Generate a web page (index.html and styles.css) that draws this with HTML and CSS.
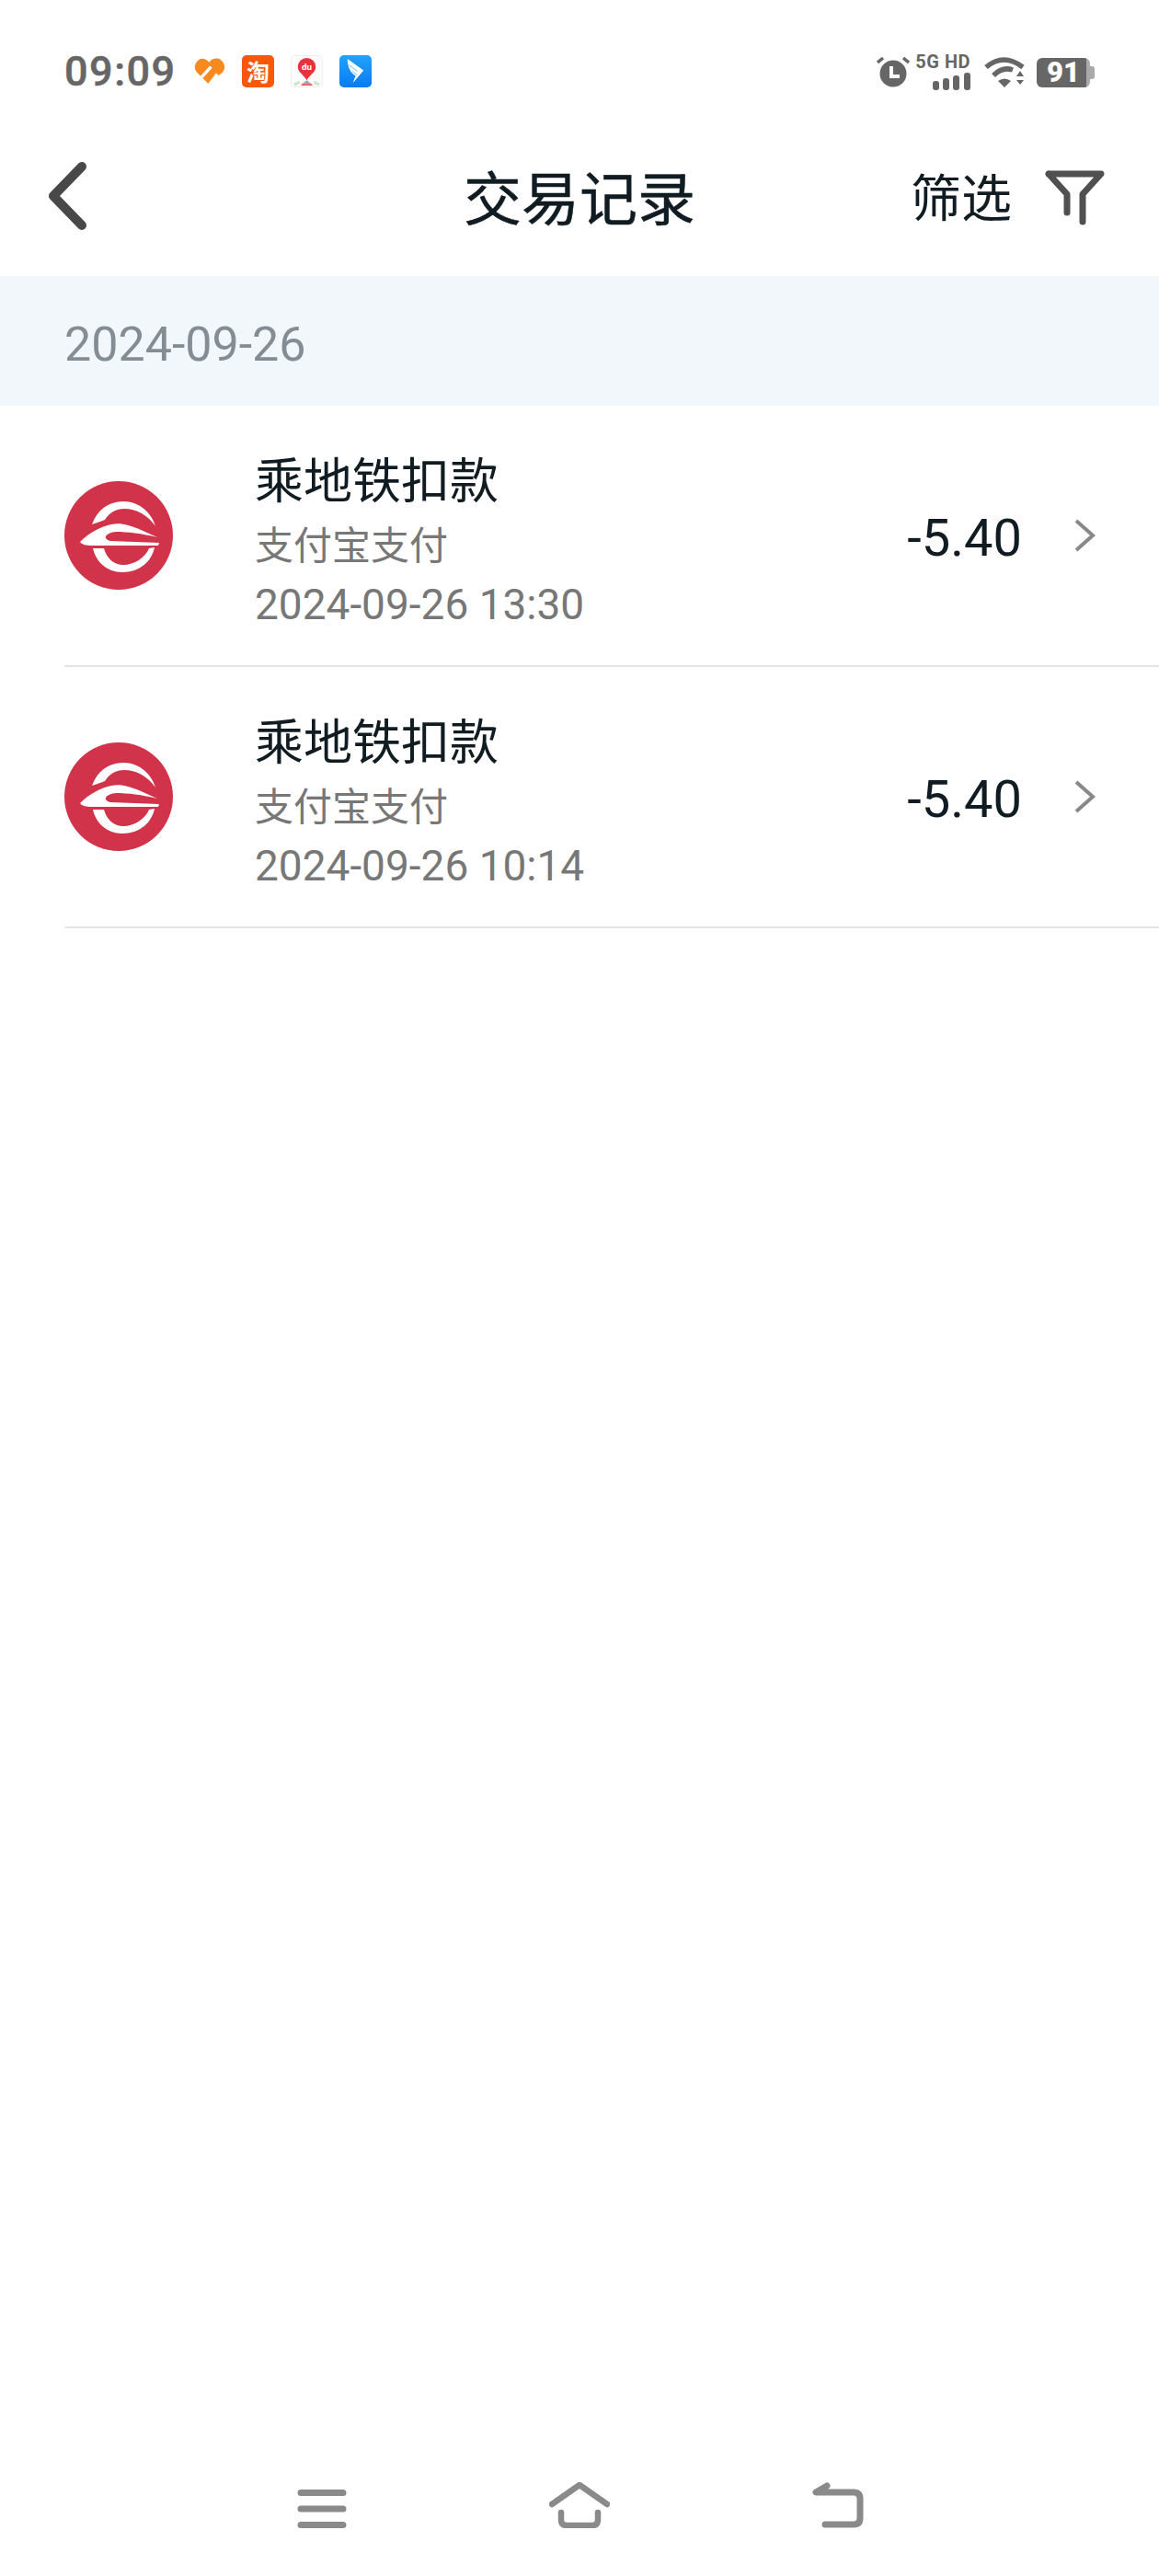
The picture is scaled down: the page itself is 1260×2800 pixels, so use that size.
FILE: index.html
```html
<!DOCTYPE html>
<html lang="zh">
<head>
<meta charset="utf-8">
<title>交易记录</title>
<link rel="stylesheet" href="styles.css">
</head>
<body>
<div class="screen">
  <div class="status">
    <span class="time">09:09</span>
    <div class="apps">
      <svg width="35" height="35" viewBox="0 0 36 36"><path d="M17 32 4 19C0 14 2 7 8 4 12 3 16 5 18 8 20 4 25 3 29 4 35 7 37 14 33 19Z" fill="#f78a1f"/><path d="M9 25 20 13M18 33 27 21" stroke="#fff" stroke-width="3.5" fill="none"/></svg>
      <span class="taobao">淘</span>
      <svg width="35" height="35" viewBox="0 0 36 36"><rect x=".5" y=".5" width="35" height="35" rx="3" fill="#fbfbfb" stroke="#eee"/><path d="M18 3a10 10 0 0 1 10 10c0 6-7 9-10 15-3-6-10-9-10-15A10 10 0 0 1 18 3z" fill="#e8323c"/><text x="18" y="16" text-anchor="middle" class="du">du</text><path d="M18 28 13 32H23Z" fill="#9ab"/><path d="M12 33H24" stroke="#d33" stroke-width="1.5"/><path d="M4 33 10 30M32 33 26 30" stroke="#cfe5c8" stroke-width="3"/></svg>
      <svg width="35" height="35" viewBox="0 0 36 36"><defs><linearGradient id="dt" x1="0" y1="0" x2="0" y2="1"><stop offset="0" stop-color="#21a3fb"/><stop offset="1" stop-color="#0a7bef"/></linearGradient></defs><rect width="36" height="36" rx="5" fill="url(#dt)"/><path d="M9 4 27 17 15 31 18 23C13 20 9 14 9 4Z" fill="#fff"/><path d="M11 11 20 18M14 18 20 22" stroke="#9dd3fb" stroke-width="1.2"/></svg>
    </div>
    <div class="sys">
      <svg class="alarm" width="36" height="36" viewBox="0 0 36 36"><circle cx="18" cy="20" r="14.5" fill="#666"/><path d="M1 8 7 3M35 8 29 3" stroke="#666" stroke-width="3.5"/><path d="M16 12V23H25" fill="none" stroke="#fff" stroke-width="4"/></svg>
      <div class="net"><span class="nettext">5G HD</span>
        <svg width="41" height="19" viewBox="0 0 41 19"><rect x="0" y="9" width="7" height="10" rx="3" fill="#666"/><rect x="11" y="6" width="7" height="13" rx="3" fill="#666"/><rect x="22" y="3" width="7" height="16" rx="3" fill="#666"/><rect x="34" y="0" width="7" height="19" rx="3" fill="#666"/></svg>
      </div>
      <svg class="wifi" width="44" height="34" viewBox="0 0 44 34"><g fill="none" stroke="#666" stroke-width="5.5"><path d="M2 12Q21-4 42 12"/><path d="M10 21Q20 11 31 15"/></g><path d="M15 27Q22 22 29 27L22 34Z" fill="#666"/><path d="M39 16 43 22H35ZM39 31 35 26H43Z" fill="#666"/></svg>
      <div class="battery"><span class="level">91</span><span class="cap"></span></div>
    </div>
  </div>

  <header class="nav">
    <svg class="back" width="44" height="80" viewBox="0 0 44 80"><path d="M39 10 8 42 39 74" fill="none" stroke="#484848" stroke-width="10" stroke-linecap="round" stroke-linejoin="round"/></svg>
    <h1 class="title">交易记录</h1>
    <div class="filter">
      <span class="filter-text">筛选</span>
      <svg class="filter-icon" width="66" height="64" viewBox="0 0 66 64"><path d="M4 5H61L41 27V57M4 5 24 27V47" fill="none" stroke="#505050" stroke-width="7" stroke-linecap="round" stroke-linejoin="round"/></svg>
    </div>
  </header>

  <div class="date-band">2024-09-26</div>

  <ul class="list">
    <li class="row">
      <svg class="logo" width="120" height="120" viewBox="0 0 120 120"><use href="#metro"/></svg>
      <div class="info">
        <div class="name">乘地铁扣款</div>
        <div class="sub">支付宝支付</div>
        <div class="when">2024-09-26 13:30</div>
      </div>
      <span class="amount">-5.40</span>
      <svg class="chev" width="24" height="36" viewBox="0 0 24 36"><path d="M2 2 20 18 2 34" fill="none" stroke="#888" stroke-width="4"/></svg>
    </li>
    <li class="row">
      <svg class="logo" width="120" height="120" viewBox="0 0 120 120"><use href="#metro"/></svg>
      <div class="info">
        <div class="name">乘地铁扣款</div>
        <div class="sub">支付宝支付</div>
        <div class="when">2024-09-26 10:14</div>
      </div>
      <span class="amount">-5.40</span>
      <svg class="chev" width="24" height="36" viewBox="0 0 24 36"><path d="M2 2 20 18 2 34" fill="none" stroke="#888" stroke-width="4"/></svg>
    </li>
  </ul>

  <nav class="softkeys">
    <svg class="menu-key" width="54" height="42" viewBox="0 0 54 42"><path d="M4 3.5H50M4 21H50M4 38.5H50" stroke="#8a8a8a" stroke-width="7" stroke-linecap="round"/></svg>
    <svg width="66" height="50" viewBox="0 0 66 50"><path d="M3 24 33 3 63 24" fill="none" stroke="#8a8a8a" stroke-width="6.5" stroke-linecap="round" stroke-linejoin="round"/><path d="M13 33V41Q13 47 19 47H47Q53 47 53 41V33" fill="none" stroke="#8a8a8a" stroke-width="6.5" stroke-linecap="round"/></svg>
    <svg width="56" height="50" viewBox="0 0 56 50"><path d="M16 4 4 11H45Q52 11 52 18V39Q52 46 45 46H14" fill="none" stroke="#8a8a8a" stroke-width="7" stroke-linecap="round" stroke-linejoin="round"/></svg>
  </nav>

  <svg class="defs" width="0" height="0">
    <defs>
      <g id="metro">
        <circle cx="59" cy="60" r="59" fill="#d0334a"/>
        <path d="M30 48C36 32 48 23 64 23 82 23 95 36 99 50 91 38 78 31 65 31 56 31 49 35 44 43 40 45 35 46 30 48Z" fill="#fff"/>
        <path d="M17 67C27 57 38 51 51 48 62 46 70 49 81 53L101 62C85 58 68 56 56 56 46 57 40 63 50 66L103 68 102 71H30C24 71 19 70 17 67Z" fill="#fff"/>
        <path d="M31 74C34 88 46 100 63 100 82 100 95 88 98 73L92 74C88 84 76 92 64 92 54 92 46 85 43 74Z" fill="#fff"/>
      </g>
    </defs>
  </svg>
</div>
</body>
</html>
```
FILE: styles.css
```css
* { box-sizing: border-box; }
html, body { margin: 0; padding: 0; background: #fff; }
body { font-family: "Roboto", "Noto Sans CJK SC", sans-serif; }
.screen { width: 1260px; height: 2800px; display: flex; flex-direction: column; overflow: hidden; position: relative; }

.status { height: 150px; flex: none; display: flex; align-items: flex-start; padding: 54px 70px 0 70px; }
.time { width: 125px; font-size: 45px; font-weight: 500; color: #666; line-height: 48px; letter-spacing: 1.5px; -webkit-text-stroke: .5px #666; }
.apps { display: flex; gap: 18px; margin-left: 15px; margin-top: 6px; }
.taobao { width: 35px; height: 35px; border-radius: 5px; background: #f8570c; color: #fff; font: 700 25px/35px "Noto Sans CJK SC", sans-serif; text-align: center; }
.du { font: 700 10px "Roboto", sans-serif; fill: #fff; }
.sys { margin-left: auto; margin-top: 4px; height: 40px; display: flex; align-items: center; }
.alarm { margin-right: 9px; }
.net { display: flex; flex-direction: column; align-items: flex-end; width: 57px; gap: 4px; }
.nettext { font: 700 20px/16px "Roboto", sans-serif; color: #666; white-space: nowrap; letter-spacing: .5px; }
.wifi { margin-left: 15px; margin-right: 13px; }
.battery { width: 58px; height: 32px; background: linear-gradient(to right, #666 93%, #aaa 93%); border-radius: 6px; margin-right: 5px; margin-top: 1px; color: #fff; font: 900 31px/32px "Roboto", sans-serif; text-align: center; position: relative; }
.level { display: block; }
.cap { position: absolute; right: -5px; top: 9px; width: 5px; height: 14px; background: #aaa; border-radius: 0 3px 3px 0; }

.nav { flex: none; height: 150px; display: grid; grid-template-columns: 1fr auto 1fr; align-items: center; padding: 0 58px 28px; }
.back { margin-left: -8px; }
.title { margin: 2px 0 0; font-size: 63px; font-weight: 400; line-height: 72px; color: #111b22; font-family: "Noto Sans CJK SC", sans-serif; -webkit-text-stroke: .5px #111b22; }
.filter { justify-self: end; display: flex; align-items: center; gap: 36px; }
.filter-text { font-size: 55px; line-height: 64px; color: #111b22; font-family: "Noto Sans CJK SC", sans-serif; }
.filter-icon { margin-top: 10px; }

.date-band { flex: none; height: 141px; background: #f2f7fb; padding-left: 70px; font-size: 52px; line-height: 150px; color: #858d94; }
.list { list-style: none; margin: 0; padding: 0 0 0 70px; }
.row { height: 284px; border-bottom: 2px solid #e4e4e4; display: flex; align-items: center; padding-right: 68px; }
.logo { flex: none; }
.info { margin-left: 87px; padding-top: 5px; display: flex; flex-direction: column; flex: 1; }
.name { font-size: 53px; line-height: 72px; color: #111b22; font-family: "Noto Sans CJK SC", sans-serif; }
.sub { font-size: 42px; line-height: 70px; color: #777; font-family: "Noto Sans CJK SC", sans-serif; }
.when { font-size: 46px; line-height: 60px; margin-top: 2px; color: #777; }
.amount { font-size: 56px; color: #111b22; margin-right: 57px; margin-top: 5px; }
.chev { flex: none; }

.softkeys { flex: none; margin-top: auto; margin-bottom: 52px; padding-left: 323px; display: flex; gap: 220px; align-items: flex-start; }
.menu-key { margin-top: 8px; }
.defs { position: absolute; }
```
